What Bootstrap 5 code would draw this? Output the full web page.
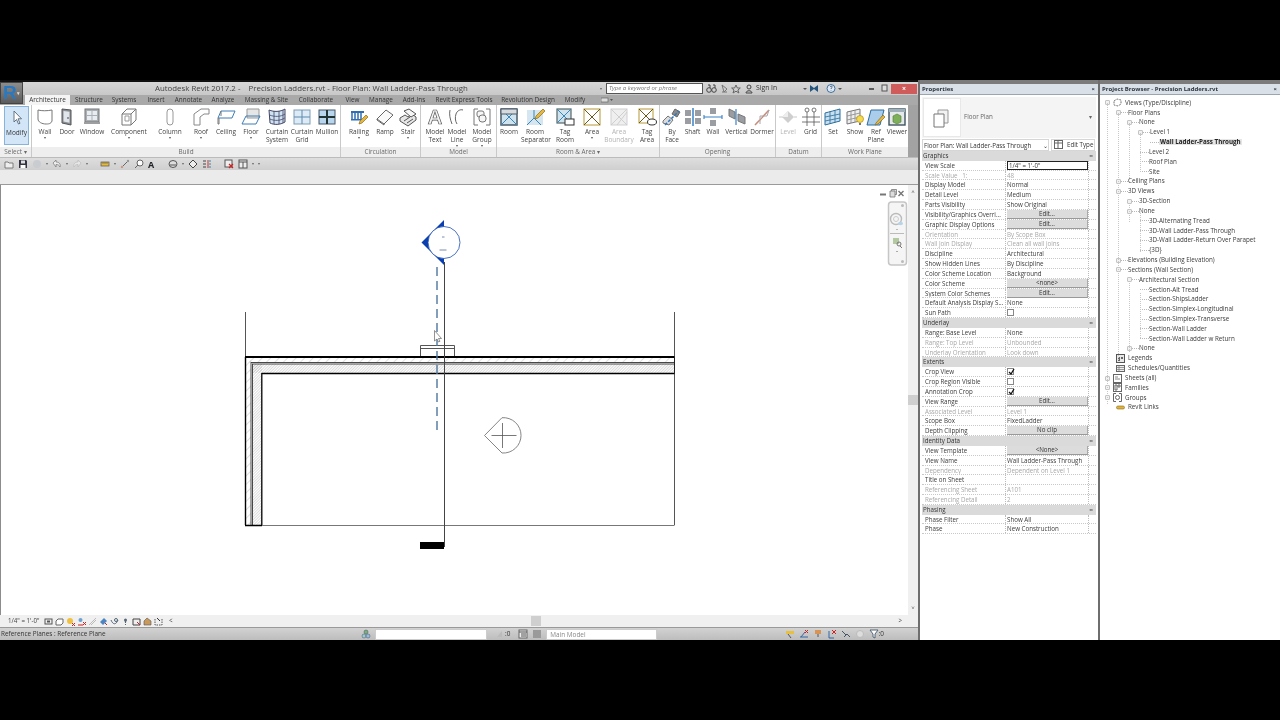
<!DOCTYPE html>
<html lang="en">
<head>
<meta charset="utf-8">
<title>Autodesk Revit 2017.2</title>
<link href="https://cdn.jsdelivr.net/npm/bootstrap@5.3.0/dist/css/bootstrap.min.css" rel="stylesheet">
<style>
html,body{margin:0;height:720px;overflow:hidden;background:#000}
body{font-family:"Open Sans","Liberation Sans",sans-serif;font-size:6.6px;color:#3a3a3a;padding-top:80px;line-height:1}
.rv-app{height:560px;width:1280px;background:#6e6e6e;filter:blur(.3px)}
.rv-main{width:918px;background:#fff;flex:none}
.rv-title{height:15px;border-top:2px solid #111;background:linear-gradient(#d8d8d8,#c8c8c8);position:relative}
.rv-logo{position:absolute;left:0;top:0;width:23px;height:22px;background:linear-gradient(#8d8d8d,#5c5c5c);border:1px solid #444;z-index:3;color:#2a78c0;font:bold 19px/20px "Liberation Sans",sans-serif;padding-left:2px}
.rv-logo small{position:absolute;left:16px;top:8px;font-size:5px;line-height:5px;color:#ddd}
.rv-titletext{width:600px;padding-left:155px;font-size:7.85px;line-height:11px;white-space:pre;color:#444;flex:none}
.rv-search{width:97px;height:11px;background:#fff;border:1px solid #555;font-style:italic;font-size:6px;line-height:9px;padding-left:2px;color:#777;margin-left:4px;flex:none}
.rv-signin{font-size:6.8px;color:#333;width:46px;flex:none;margin-left:1px}
.rv-close{width:26px;height:10px;background:#d05b5b;color:#fff;font-size:7px;line-height:9px;text-align:center;margin-right:1px;font-weight:bold;flex:none}
.rv-tabs{height:10px;background:#a9a9a9;padding-left:25px}
.rv-tabs>div{text-align:center;font-size:6.4px;line-height:10px;color:#333;white-space:nowrap}
.rv-tabs>.rv-on{background:#f4f4f4}
.t45{width:45px}.t38{width:38px}.t32{width:32px}.t33{width:33px}.t36{width:36px}.t51{width:51px}.t48{width:48px}.t25{width:25px}.t34{width:34px}.t66{width:66px}.t62{width:62px}
.rv-ribbon{height:52px;background:#a2a2a2}
.rv-panel{border-right:1px solid #c9c9c9;height:52px;background:#fff}
.rv-tools{height:42px}
.rv-ptitle{height:10px;background:#eeeeee;text-align:center;font-size:6.4px;line-height:10px;color:#6a6a6a;white-space:nowrap}
.rv-tool{text-align:center;padding-top:2px;font-size:6.5px;line-height:8px;color:#444;flex:none;position:relative;white-space:nowrap}
.rv-tool svg{display:block;margin:0 auto 1px;width:20px;height:20px}
.rv-off{color:#b4b4b4}
.rv-sel{background:#d3e6f7;border:1px solid #88b4dc;height:39px;margin:1px 3px 0 4px;width:25px;padding-top:1px;color:#333}
.rv-drop::after{content:"";display:block;width:0;height:0;margin:1px auto 0;border:1.5px solid transparent;border-top:2px solid #555;border-bottom:0}
.w19{width:19px}.w20{width:20px}.w21{width:21px}.w22{width:22px}.w24{width:24px}.w25{width:25px}.w26{width:26px}.w28{width:28px}.w32{width:32px}.w36{width:36px}.w46{width:46px}.w2{width:2px}.w3{width:3px}.w4{width:4px}
.p32{width:32px}.p309{width:309px}.p80{width:80px}.p76{width:76px}.p163{width:163px}.p116{width:116px}.p46{width:46px}.p86{width:86px}
.rv-qat{height:13px;background:linear-gradient(#dedede,#cfcfcf);padding-left:4px;gap:4px;border-top:1px solid #bbb}
.rv-qat svg{width:10px;height:10px;flex:none}
.rv-bigA{font-size:9px;width:8px}
.rv-caret{width:0;height:0;border:1.5px solid transparent;border-top:2px solid #666;border-bottom:0;flex:none}
.rv-band{height:15px;background:#ebebeb;border-bottom:1px solid #9a9a9a}
.rv-canvas{height:430px;background:#fff}
.rv-draw{width:908px;position:relative;border-left:1px solid #8c8c8c}
.rv-draw svg{position:absolute;left:-1px;top:0;width:908px;height:430px}
.rv-vs{width:10px;background:#f0f0f0;font-size:6px;color:#555;text-align:center;padding:4px 0}
.rv-gap200{height:200px;flex:none}
.rv-thumb{height:10px;background:#cfcfcf;width:100%;flex:none}
.rv-viewbar{height:12px;background:#f0f0f0;padding-left:8px;gap:2px;font-size:6.2px}
.rv-viewbar svg{width:9px;height:9px;flex:none}
.rv-scale{width:34px;color:#444;flex:none;white-space:nowrap}
.rv-spc{width:354px;flex:none}
.rv-hthumb{width:10px;height:10px;background:#cfcfcf;flex:none}
.rv-status{height:13px;background:linear-gradient(#d2d2d2,#bdbdbd);border-top:1px solid #999;font-size:6.4px;line-height:12px;color:#333;padding-right:34px}
.rv-stext{width:361px;padding-left:1px;flex:none}
.rv-status svg{width:10px;height:10px;flex:none}
.rv-inp{background:#fff;height:11px;border:1px solid #ccc;color:#888;padding-left:3px;font-size:6.4px;line-height:9px;flex:none}
.i112{width:112px}.i111{width:111px}
.rv-pn{background:#fff;position:relative;flex:none}
.rv-prop{width:178px;margin-left:2px}
.rv-brow{width:180px;margin-left:2px}
.rv-phead{height:15px;border-top:4px solid #7b7b7b;background:#d9e0e7;border-bottom:1px solid #9aa5b0;font-weight:700;font-size:6px;line-height:10px;padding:0 3px 0 2px;color:#2c3440;white-space:nowrap}
.rv-type{height:41px;margin:2px 2px 0;background:#f4f4f4;padding:0;font-size:6.2px;color:#666}
.rv-thumbnail{width:38px;height:39px;background:#fff;border:1px solid #e8e8e8;flex:none;margin:0 3px 0 1px}
.rv-pick{height:13px;margin:0 2px;font-size:6.2px;line-height:11px;color:#333;gap:2px}
.rv-sel2{width:127px;border:1px solid #d6d6d6;padding-left:1px;background:#fff;height:12px;flex:none;white-space:nowrap}
.rv-edit{width:44px;flex:none;border:1px solid #d6d6d6;height:12px;padding:0 0 0 2px;font-size:6.2px;background:#fff;white-space:nowrap}
.rv-rows{margin:0 2px;font-size:6.2px}
.rv-row{height:9.84px;border-bottom:1px dotted #c9c9c9;color:#3a3a3a;line-height:9px;white-space:nowrap}
.rv-k{width:84px;padding-left:3px;border-right:1px dotted #bbb;overflow:hidden;flex:none;height:100%}
.rv-v{width:83px;padding-left:1px;border-right:1px dotted #bbb;flex:none;height:100%;position:relative}
.rv-g{color:#a8a8a8}
.rv-hd{height:9.84px;background:#dadada;padding:0 3px 0 1px;line-height:9px;color:#333;white-space:nowrap}
.rv-hd b{font-weight:400;flex:1}
.rv-btnx{display:block;width:81px;height:9px;padding:0;margin:0;border:0;border-radius:0;font-size:6.2px;line-height:8px;background:#dcdcdc;border-bottom:1px solid #999;border-right:1px solid #aaa;color:#333;text-align:center}
.rv-edit2{display:block;width:81px;height:9px;border:1px solid #222;line-height:7px;margin-top:0;padding-left:1px;background:#fff}
.rv-cb{display:block;width:7px;height:7px;border:1px solid #888;background:#fff;margin:1px 0 0 0;position:relative}
.rv-cb svg{position:absolute;left:0;top:-1px;width:7px;height:7px}
.rv-tree{font-size:6.25px;padding-top:3px;color:#3a3a3a;position:relative}
.rv-tr{height:9.84px;white-space:nowrap}
.rv-box{width:5px;height:5px;border:1px solid #c4c4c4;background:#f2f2f2;flex:none;border-radius:1px}
.rv-dot{border-top:1px dotted #b9b9b9;flex:none}
.d6{width:7px}.d9{width:9px}
.s5{width:5px;flex:none}.s16{width:16px;flex:none}.s27{width:27px;flex:none}.s38{width:38px;flex:none}.s40{width:40px;flex:none}.s50{width:50px;flex:none}.s13{width:13px;flex:none}
.rv-ic{width:9px;height:9px;flex:none;margin:0 3px 0 3px}
.rv-tree .rv-cur{background:#e6e6e6;font-weight:700;color:#222;padding:0 1px}
.rv-vl{position:absolute;left:0;top:0;width:180px;height:320px;pointer-events:none}
</style>
</head>
<body>
<svg width="0" height="0" class="d-none">
<defs>
<linearGradient id="bl" x1="0" y1="0" x2="0" y2="1"><stop offset="0" stop-color="#bcd9ee"/><stop offset="1" stop-color="#4e93cf"/></linearGradient>
<linearGradient id="gy" x1="0" y1="0" x2="1" y2="1"><stop offset="0" stop-color="#f4f4f4"/><stop offset="1" stop-color="#bdbdbd"/></linearGradient>
<linearGradient id="yl" x1="0" y1="0" x2="0" y2="1"><stop offset="0" stop-color="#f9e48e"/><stop offset="1" stop-color="#eecb52"/></linearGradient>
</defs>
</svg>

<div class="rv-app d-flex">
 <div class="rv-main d-flex flex-column">
  <div class="rv-title d-flex align-items-center">
   <div class="rv-logo">R<small>▾</small></div>
   <div class="rv-titletext">Autodesk Revit 2017.2 -    Precision Ladders.rvt - Floor Plan: Wall Ladder-Pass Through</div>
   <div class="rv-caret"></div>
   <div class="rv-search">Type a keyword or phrase</div>
   <svg width="52" height="11" viewBox="0 0 52 11" class="flex-none"><g fill="none" stroke="#444"><circle cx="6" cy="7" r="2.300"/><circle cx="11" cy="7" r="2.300"/><path d="M5 2h2v3M10 2h2v3"/><path d="M19 2l5 4-3 3zM19 9h5" stroke="#777"/><path d="M33 2l1.300 3h3l-2.400 2 1 3-2.900-1.800L30 10l1-3-2.400-2h3z" stroke="#666"/><circle cx="46" cy="4" r="2"/><path d="M43 10c0-3 6-3 6 0z"/></g></svg>
   <div class="rv-signin">Sign In</div>
   <svg width="42" height="11" viewBox="0 0 42 11" class="flex-none"><path d="M1 5l2 2 2-2z" fill="#555"/><path d="M8 2l4 3 4-3v7l-4-3-4 3z" fill="#24557f"/><circle cx="29" cy="5.500" r="4" fill="#dfeaf6" stroke="#3f6f9f"/><path d="M28 4c1-1.500 3-.5 2 .5-.6.6-1 .8-1 1.500M29 7.500v.5" stroke="#345" fill="none" stroke-width=".8"/><path d="M36 5l2 2 2-2z" fill="#555"/></svg>
   <svg width="28" height="11" viewBox="0 0 28 11" class="ms-auto flex-none"><path d="M6 6h5" stroke="#333" stroke-width="1.500"/><rect x="19" y="2" width="5" height="6" fill="#ddd" stroke="#555"/></svg>
   <div class="rv-close">×</div>
  </div>

  <div class="rv-tabs d-flex">
   <div class="t45 rv-on">Architecture</div><div class="t38">Structure</div><div class="t32">Systems</div><div class="t32">Insert</div><div class="t33">Annotate</div><div class="t36">Analyze</div><div class="t51">Massing &amp; Site</div><div class="t48">Collaborate</div><div class="t25">View</div><div class="t32">Manage</div><div class="t34">Add-Ins</div><div class="t66">Revit Express Tools</div><div class="t62">Revolution Design</div><div class="t32">Modify</div><div class="t32"><svg width="12" height="6" viewBox="0 0 12 6"><rect x="0" y="1" width="7" height="4" fill="#ddd" stroke="#666" stroke-width=".7"/><path d="M9 2l1.500 2 1.500-2z" fill="#555"/></svg></div>
  </div>

  <div class="rv-ribbon d-flex">
   <div class="rv-panel p32 d-flex flex-column flex-none">
    <div class="rv-tools d-flex"><div class="rv-tool rv-sel"><svg viewBox="0 0 20 20"><path d="M7 3v11l2.500-2.500 2 4.500 1.500-.7-2-4.500h3.500z" fill="#fff" stroke="#567" stroke-width=".9"/></svg>Modify</div></div>
    <div class="rv-ptitle">Select <span>▾</span></div>
   </div>
   <div class="rv-panel p309 d-flex flex-column flex-none">
    <div class="rv-tools d-flex">
     <div class="w2"></div>
     <div class="rv-tool w22 rv-drop"><svg viewBox="0 0 20 20"><path d="M3 3c4 1 9 1 14 0v11c-1 3-4 3-6 3-4 0-8-2-8-5z" fill="url(#gy)" stroke="#777"/></svg>Wall</div>
     <div class="rv-tool w22"><svg viewBox="0 0 20 20"><path d="M5 2l9 1v15l-9-2z" fill="#8a8f96" stroke="#555"/><path d="M6.500 4l6 .7v11l-6-1.200z" fill="#dfe5ea"/><circle cx="11" cy="11" r=".8" fill="#333"/></svg>Door</div>
     <div class="rv-tool w28"><svg viewBox="0 0 20 20"><rect x="3" y="2" width="14" height="13" fill="#aab0b5" stroke="#777"/><path d="M5 4h4.500v4H5zM10.500 4H15v4h-4.500zM5 9h4.500v4H5zM10.500 9H15v4h-4.500z" fill="#e9edf1"/><path d="M2 15h16v2H2z" fill="#9f9f9f"/></svg>Window</div>
     <div class="rv-tool w46 rv-drop"><svg viewBox="0 0 20 20"><path d="M3 7l5-5h9v11l-5 5H3z" fill="url(#gy)" stroke="#777"/><path d="M3 7h9v11M12 7l5-5" fill="none" stroke="#777"/><path d="M6 9h4v5H6z" fill="#fff" stroke="#999"/></svg>Component</div>
     <div class="rv-tool w36 rv-drop"><svg viewBox="0 0 20 20"><rect x="7" y="2" width="6" height="16" rx="3" fill="url(#gy)" stroke="#999"/></svg>Column</div>
     <div class="rv-tool w26 rv-drop"><svg viewBox="0 0 20 20"><path d="M3 18V7l7-5h8v5h-5l-4 3v8z" fill="url(#gy)" stroke="#888"/></svg>Roof</div>
     <div class="rv-tool w24"><svg viewBox="0 0 20 20"><path d="M5 4h14l-3 7H2z" fill="url(#bl)" stroke="#3e7db5"/><path d="M2 11v6h1v-6M5 4v5" stroke="#777" fill="none"/></svg>Ceiling</div>
     <div class="rv-tool w26 rv-drop"><svg viewBox="0 0 20 20"><path d="M6 2h12v9H6z" fill="#e6e6e6" stroke="#999"/><path d="M5 9h14l-4 8H1z" fill="url(#bl)" stroke="#3e7db5"/></svg>Floor</div>
     <div class="rv-tool w26"><svg viewBox="0 0 20 20"><path d="M2 3c5 2 11 2 16-1v13c-5 3-11 3-15 1z" fill="#cfe2f1" stroke="#446"/><path d="M7 4v13M12 4v13M16 3v13M2.500 8c5 2 11 2 15.500-1M2.800 12c5 2 10 2 15-1" stroke="#446" fill="none" stroke-width=".8"/></svg>Curtain<br>System</div>
     <div class="rv-tool w24"><svg viewBox="0 0 20 20"><rect x="2" y="3" width="16" height="14" fill="#dcebf6" stroke="#7d9db5"/><path d="M10 3v14M2 10h16" stroke="#5d8bb0"/></svg>Curtain<br>Grid</div>
     <div class="rv-tool w26"><svg viewBox="0 0 20 20"><rect x="2" y="3" width="16" height="14" fill="#b7d6ee" stroke="#456"/><path d="M10 3v14M2 10h16" stroke="#233" stroke-width="2"/></svg>Mullion</div>
    </div>
    <div class="rv-ptitle">Build</div>
   </div>
   <div class="rv-panel p80 d-flex flex-column flex-none">
    <div class="rv-tools d-flex">
     <div class="w4"></div>
     <div class="rv-tool w28 rv-drop"><svg viewBox="0 0 20 20"><path d="M2 4h13v2H2z" fill="#2f6fb0"/><path d="M3 6v7M6 6v7M9 6v7M12 6v7" stroke="#2f6fb0" stroke-width="1.500"/><path d="M2 12h13v1.500H2z" fill="#2f6fb0"/><path d="M10 17l1-3 6-6 2 2-6 6z" fill="#e7b83f" stroke="#8a6a1d" stroke-width=".7"/></svg>Railing</div>
     <div class="rv-tool w24"><svg viewBox="0 0 20 20"><path d="M2 12l9-9 7 5-9 9z" fill="#fafafa" stroke="#666"/><path d="M2 12v1l7 5v-1" fill="none" stroke="#666"/></svg>Ramp</div>
     <div class="rv-tool w22 rv-drop"><svg viewBox="0 0 20 20"><path d="M2 11l5-3 3 2 4-3 4 3v3l-8 6-8-5z" fill="#e6e6e6" stroke="#555"/><path d="M6 4l5-2 7 5-5 3z" fill="#f6f6f6" stroke="#555"/><path d="M6 14l6-4M9 16l6-4" stroke="#555"/></svg>Stair</div>
    </div>
    <div class="rv-ptitle">Circulation</div>
   </div>
   <div class="rv-panel p76 d-flex flex-column flex-none">
    <div class="rv-tools d-flex">
     <div class="w3"></div>
     <div class="rv-tool w22"><svg viewBox="0 0 20 20"><text x="10" y="17" text-anchor="middle" font-family="Liberation Sans,sans-serif" font-size="20" font-weight="700" fill="#f4f4f4" stroke="#555" stroke-width=".7">A</text></svg>Model<br>Text</div>
     <div class="rv-tool w22 rv-drop"><svg viewBox="0 0 20 20"><path d="M3 3c-1 4 0 9 2 14M16 3c-3-1-6 1-7 4s-1 7 1 10" fill="none" stroke="#666" stroke-width="1"/></svg>Model<br>Line</div>
     <div class="rv-tool w28 rv-drop"><svg viewBox="0 0 20 20"><path d="M6 2H2v16h4M14 2h4v16h-4" fill="none" stroke="#777"/><rect x="5" y="4" width="7" height="6" rx="2" fill="#f6f6f6" stroke="#777"/><rect x="7" y="8" width="7" height="7" rx="3" fill="#f6f6f6" stroke="#777"/></svg>Model<br>Group</div>
    </div>
    <div class="rv-ptitle">Model</div>
   </div>
   <div class="rv-panel p163 d-flex flex-column flex-none">
    <div class="rv-tools d-flex">
     <div class="rv-tool w24"><svg viewBox="0 0 20 20"><rect x="2" y="2" width="16" height="16" fill="#cfe3ef" stroke="#4a5b68" stroke-width="1.500"/><path d="M2 2l16 16M18 2L2 18" stroke="#3a87b5"/><path d="M2 2h16v5H2z" fill="#d6dadd" stroke="#4a5b68"/></svg>Room</div>
     <div class="rv-tool w28"><svg viewBox="0 0 20 20"><path d="M2 3h16v15H2z" fill="#d6e6f0"/><path d="M2 18l7-7 7 7M9 11V3" stroke="#3a87b5" fill="none"/><path d="M10 12l1-3 7-7 2 2-7 7z" fill="#e7b83f" stroke="#8a6a1d" stroke-width=".7"/></svg>Room<br>Separator</div>
     <div class="rv-tool w32"><svg viewBox="0 0 20 20"><rect x="2" y="2" width="14" height="14" fill="#cfe3ef" stroke="#566" stroke-width="1.200"/><path d="M2 2l14 14M16 2L2 16" stroke="#3a87b5"/><rect x="10" y="12" width="9" height="6" fill="#fff" stroke="#333"/></svg>Tag<br>Room</div>
     <div class="rv-tool w22 rv-drop"><svg viewBox="0 0 20 20"><rect x="2" y="2" width="16" height="16" fill="url(#yl)" stroke="#b69a36"/><path d="M2 2l16 16M18 2L2 18" stroke="#6b5a1c"/></svg>Area</div>
     <div class="rv-tool w32 rv-off"><svg viewBox="0 0 20 20"><rect x="2" y="2" width="16" height="16" fill="#efefef" stroke="#cfcfcf"/><path d="M2 2l16 16M18 2L2 18M18 5L8 18" stroke="#cfcfcf"/></svg>Area<br>Boundary</div>
     <div class="rv-tool w24"><svg viewBox="0 0 20 20"><rect x="2" y="2" width="14" height="14" fill="url(#yl)" stroke="#b69a36"/><path d="M2 2l14 14M16 2L2 16" stroke="#6b5a1c"/><ellipse cx="15" cy="15" rx="4.500" ry="3" fill="#fff" stroke="#333"/></svg>Tag<br>Area</div>
    </div>
    <div class="rv-ptitle">Room &amp; Area ▾</div>
   </div>
   <div class="rv-panel p116 d-flex flex-column flex-none">
    <div class="rv-tools d-flex">
     <div class="w2"></div>
     <div class="rv-tool w22"><svg viewBox="0 0 20 20"><path d="M1 14l5-5 5 4-4 5-6-2z" fill="#dcdcdc" stroke="#777"/><path d="M13 2l5 3-3 5-5-3z" fill="#8a8a8a" stroke="#666"/><path d="M3 18L17 4" stroke="#2f75c0" stroke-width="1.500" stroke-dasharray="3 1.500"/></svg>By<br>Face</div>
     <div class="rv-tool w19"><svg viewBox="0 0 20 20"><path d="M2 3h6v6H2zM12 3h6v6h-6zM2 11h6v6H2zM12 11h6v6h-6z" fill="#9a9ea2"/><path d="M10 1v18" stroke="#3b82c4" stroke-width="1.500"/></svg>Shaft</div>
     <div class="rv-tool w22"><svg viewBox="0 0 20 20"><path d="M7 1h6v6H7zM7 13h6v6H7z" fill="#9a9ea2"/><path d="M1 10h18M1 8v4M19 8v4" stroke="#3b82c4" stroke-width="1.100"/></svg>Wall</div>
     <div class="rv-tool w25"><svg viewBox="0 0 20 20"><path d="M2 2l6 3v7l-6-3zM11 7l7 3v7l-7-3z" fill="#9a9ea2" stroke="#777"/><path d="M9 2v16" stroke="#3b82c4" stroke-width="1.200"/></svg>Vertical</div>
     <div class="rv-tool w26"><svg viewBox="0 0 20 20"><path d="M3 18L17 3" stroke="#c98a7a" stroke-width="1.500"/><path d="M8 17V9h7l2-6" stroke="#a8a8a8" fill="none"/><path d="M4 16l6-6" stroke="#d9b0a5"/></svg>Dormer</div>
    </div>
    <div class="rv-ptitle">Opening</div>
   </div>
   <div class="rv-panel p46 d-flex flex-column flex-none">
    <div class="rv-tools d-flex">
     <div class="rv-tool w24 rv-off"><svg viewBox="0 0 20 20"><path d="M1 10h4M16 10h3" stroke="#c9c9c9"/><path d="M10 4l6 6-6 6-6-6z" fill="#cfcfcf"/><path d="M10 4v6H4z" fill="#eee"/></svg>Level</div>
     <div class="rv-tool w21"><svg viewBox="0 0 20 20"><g fill="none" stroke="#555" stroke-width=".8"><circle cx="6" cy="3" r="2"/><circle cx="13" cy="3" r="2"/><path d="M6 5v14M13 5v14M1 10h18M1 15h18"/></g></svg>Grid</div>
    </div>
    <div class="rv-ptitle">Datum</div>
   </div>
   <div class="rv-panel p86 d-flex flex-column flex-none border-0">
    <div class="rv-tools d-flex">
     <div class="rv-tool w22"><svg viewBox="0 0 20 20"><path d="M2 6c4-1 11-3 15-4v12L2 18z" fill="#c8dff0" stroke="#2a6d9d"/><path d="M7 4.500v12M12 3.500v12M2 10l15-3M2 14l15-3" stroke="#2a6d9d" fill="none" stroke-width=".8"/></svg>Set</div>
     <div class="rv-tool w22"><svg viewBox="0 0 20 20"><path d="M2 5l13-3v12L2 17z" fill="#eee" stroke="#777"/><path d="M6 4v12M10 3v12M2 9l13-3M2 13l13-3" stroke="#888" fill="none" stroke-width=".8"/><circle cx="15" cy="12" r="3.500" fill="#f5d94e" stroke="#a88c1d" stroke-width=".7"/><path d="M14 16h2v2h-2z" fill="#777"/></svg>Show</div>
     <div class="rv-tool w20"><svg viewBox="0 0 20 20"><path d="M5 3h13l-4 15H1z" fill="#a9cdea" stroke="#2a6d9d"/><path d="M9 18l1-2 7-8 2 2-7 7z" fill="#e7b83f" stroke="#8a6a1d" stroke-width=".7"/></svg>Ref<br>Plane</div>
     <div class="rv-tool w22"><svg viewBox="0 0 20 20"><rect x="2" y="2" width="16" height="16" fill="#e6e9eb" stroke="#3f5360" stroke-width="1.400"/><rect x="2" y="2" width="16" height="3" fill="#9fb0ba"/><path d="M6 9l4-2 4 2v6l-4 2-4-2z" fill="#7eb05a" stroke="#4e7a33" stroke-width=".6"/></svg>Viewer</div>
    </div>
    <div class="rv-ptitle">Work Plane</div>
   </div>
  </div>

  <div class="rv-qat d-flex align-items-center">
   <svg viewBox="0 0 10 10"><path d="M1 3h3l1 1h4v5H1z" fill="#eee" stroke="#666" stroke-width=".8"/></svg>
   <svg viewBox="0 0 10 10"><path d="M1 1h7l1 1v7H1z" fill="#334" /><rect x="3" y="1.500" width="4" height="3" fill="#ddd"/><rect x="2.500" y="6" width="5" height="3" fill="#fff"/></svg>
   <svg viewBox="0 0 10 10"><circle cx="5" cy="5" r="4" fill="#c9ccd0"/></svg><div class="rv-caret"></div>
   <svg viewBox="0 0 10 10"><path d="M1 4l3-3v2c3 0 5 2 4 5-1-2-2-2.500-4-2.500V8z" fill="#eee" stroke="#777" stroke-width=".7"/></svg><div class="rv-caret"></div>
   <svg viewBox="0 0 10 10"><path d="M9 4L6 1v2C3 3 1 5 2 8c1-2 2-2.500 4-2.500V8z" fill="#e6e6e6" stroke="#bbb" stroke-width=".7"/></svg><div class="rv-caret"></div>
   <div class="ms-1"></div>
   <svg viewBox="0 0 10 10"><rect x="1" y="3" width="8" height="4" fill="#e4b93c" stroke="#555" stroke-width=".7"/><path d="M3 3v2M5 3v2M7 3v2" stroke="#555" stroke-width=".6"/></svg><div class="rv-caret"></div>
   <svg viewBox="0 0 10 10"><path d="M1 9l8-8" stroke="#666"/><circle cx="2" cy="8" r="1.200" fill="#c98"/><circle cx="8" cy="2" r="1.200" fill="#999"/></svg>
   <svg viewBox="0 0 10 10"><circle cx="6" cy="4" r="3" fill="#fff" stroke="#666"/><path d="M4 6L1 9" stroke="#666"/></svg>
   <span class="fw-bold text-dark rv-bigA">A</span>
   <div class="ms-1"></div>
   <svg viewBox="0 0 10 10"><ellipse cx="5" cy="5" rx="4" ry="3.500" fill="#ddd" stroke="#555"/><path d="M2 6h6" stroke="#555"/></svg><div class="rv-caret"></div>
   <svg viewBox="0 0 10 10"><path d="M5 1l4 4-4 4-4-4z" fill="#eee" stroke="#444"/></svg>
   <svg viewBox="0 0 10 10"><path d="M1 2h3M1 5h3M1 8h3" stroke="#444"/><path d="M6 1v8" stroke="#c33"/><path d="M7 2h2M7 5h2M7 8h2" stroke="#38a"/></svg>
   <div class="ms-1"></div>
   <svg viewBox="0 0 10 10"><rect x="1" y="1" width="7" height="7" fill="#eee" stroke="#555"/><path d="M5 5l4 4M9 5L5 9" stroke="#c22" stroke-width="1.200"/></svg>
   <svg viewBox="0 0 10 10"><rect x="1" y="1" width="8" height="8" fill="#eee" stroke="#555"/><path d="M1 3h8M5 3v6" stroke="#555"/></svg><div class="rv-caret"></div>
   <div class="rv-caret"></div>
  </div>
  <div class="rv-band"></div>

  <div class="rv-canvas d-flex">
   <div class="rv-draw">
    <svg viewBox="0 185 908 430">
     <defs>
      <pattern id="h1" width="6" height="6" patternUnits="userSpaceOnUse" patternTransform="rotate(45)"><path d="M0 0V6" stroke="#999" stroke-width=".6"/></pattern>
      <pattern id="h2" width="2" height="2" patternUnits="userSpaceOnUse" patternTransform="rotate(45)"><path d="M0 0V2" stroke="#aaa" stroke-width=".8"/></pattern>
     </defs>
     <path d="M245.500 312V525M674.500 312V525" stroke="#555"/>
     <rect x="246" y="358" width="428" height="4.500" fill="url(#h1)"/>
     <rect x="252" y="364" width="422" height="9" fill="url(#h2)"/>
     <rect x="253" y="364" width="9" height="161" fill="url(#h2)"/>
     <rect x="246" y="358" width="5" height="167" fill="url(#h1)"/>
     <path d="M245 357H674.500" stroke="#000" stroke-width="2"/>
     <path d="M251 362.500H674M252 364H674M251 362V525M252.500 364V525" stroke="#333" stroke-width=".9"/>
     <path d="M262 373.500H674.500M261.800 373V525" stroke="#000" stroke-width="1.300"/>
     <path d="M674.500 357V374" stroke="#222"/>
     <path d="M245.500 357V525M245 525.500H262" stroke="#000" stroke-width="1.400"/>
     <path d="M262 525.500H674.500" stroke="#777"/>
     <path d="M420.500 356V345.500H454.500V356M420.500 348.500H454.500" fill="none" stroke="#555"/>
     <path d="M444.500 262V547" stroke="#444"/>
     <path d="M437 267V433" stroke="#4f769f" stroke-width="1.400" stroke-dasharray="9 5"/>
     <rect x="420" y="542" width="24" height="7" fill="#000"/>
     <polygon points="421.500,242.500 444,220 444,265" fill="#0b3fb0"/>
     <circle cx="444" cy="242.500" r="16" fill="#fff" stroke="#1e4fb0" stroke-width=".8"/>
     <path d="M442 237h2.500M439.500 250h7" stroke="#6a7fa5" stroke-width=".9"/>
     <path d="M484.500 435.500L502 417.700A17.700 17.700 0 1 1 502 453Z" fill="#fff" stroke="#777" stroke-width=".9"/>
     <path d="M491.500 435.500H516.500M502.500 423V448" stroke="#555" stroke-width=".8"/>
     <path d="M434.500 330.500V341L437 339l1.500 3 1.500-.7-1.500-2.800h3z" fill="#fff" stroke="#666" stroke-width=".7"/>
     <path d="M880 194.500h6" stroke="#777" stroke-width="2"/>
     <path d="M890 191h5v6h-5zM891.500 191v-1.500h5v5h-1.500" fill="#ddd" stroke="#777" stroke-width=".8"/>
     <path d="M898.500 191l5 5M903.500 191l-5 5" stroke="#777" stroke-width="1.400"/>
     <rect x="888.500" y="202" width="18" height="63" rx="3" fill="#f5f5f5" stroke="#c6c6c6" stroke-width="1.500"/>
     <circle cx="902.500" cy="205.500" r="1.500" fill="#bbb"/><circle cx="902.500" cy="261.500" r="1.500" fill="#bbb"/>
     <circle cx="896" cy="219" r="5.500" fill="none" stroke="#bbb" stroke-width="1.400"/><circle cx="896" cy="219" r="2.500" fill="none" stroke="#ccc"/>
     <ellipse cx="900.500" cy="223.500" rx="2.500" ry="1.800" fill="#b9d3e6"/>
     <path d="M896 229.500h2M890 233.500h14" stroke="#bbb"/>
     <rect x="893" y="238" width="6" height="6" fill="#b2c9a2"/><circle cx="899" cy="244" r="2" fill="none" stroke="#777"/><path d="M900 246l2 2" stroke="#777"/>
     <path d="M896 251.500h2" stroke="#aaa"/>
    </svg>
   </div>
   <div class="rv-vs d-flex flex-column align-items-center"><span>˄</span><div class="rv-gap200"></div><div class="rv-thumb"></div><div class="flex-grow-1"></div><span>˅</span></div>
  </div>

  <div class="rv-viewbar d-flex align-items-center">
   <div class="rv-scale">1/4" = 1'-0"</div>
   <svg viewBox="0 0 9 9"><rect x="1" y="2" width="7" height="5" fill="#eee" stroke="#555"/><rect x="3" y="3.500" width="3" height="2" fill="#555"/></svg>
   <svg viewBox="0 0 9 9"><path d="M1 4l2-2h5v4L6 8H1z" fill="#fff" stroke="#666"/></svg>
   <svg viewBox="0 0 9 9"><circle cx="4" cy="4" r="3" fill="#f0c040"/><path d="M6 6l3 3M9 6L6 9" stroke="#c22"/></svg>
   <svg viewBox="0 0 9 9"><circle cx="3.500" cy="3" r="2" fill="#6fa0d0"/><path d="M1 8h5M6 5l3 3M9 5L6 8" stroke="#c22"/></svg>
   <svg viewBox="0 0 9 9"><path d="M1 8l7-7M3 8l5-5" stroke="#bbb"/></svg>
   <svg viewBox="0 0 9 9"><path d="M1 5l4-4 3 3-4 4z" fill="#4c85c4"/><path d="M6 6l2 2" stroke="#c22"/></svg>
   <svg viewBox="0 0 9 9"><path d="M1 3c2 5 5 5 7 0" fill="none" stroke="#567"/><circle cx="6" cy="3" r="1.500" fill="none" stroke="#567"/></svg>
   <svg viewBox="0 0 9 9"><path d="M3 3a1.500 1.500 0 1 1 3 0c0 1-1 1-1 3H4c0-2-1-2-1-3zM4 7h1v1H4z" fill="#567"/></svg>
   <svg viewBox="0 0 9 9"><path d="M1 2h7v6H1z" fill="#eee" stroke="#444"/><path d="M5 5l3 3" stroke="#c22"/></svg>
   <svg viewBox="0 0 9 9"><path d="M1 8V4l3-3 4 3v4z" fill="#c99a5a" stroke="#555" stroke-width=".6"/></svg>
   <svg viewBox="0 0 9 9"><path d="M1 2v6h7V2" fill="none" stroke="#555" stroke-dasharray="1.500 1"/><path d="M3 1l3 3" stroke="#333"/></svg>
   <span class="ms-1">&lt;</span>
   <div class="rv-spc"></div>
   <div class="rv-hthumb"></div>
   <span class="ms-auto me-3">&gt;</span>
  </div>

  <div class="rv-status d-flex align-items-center">
   <div class="rv-stext">Reference Planes : Reference Plane</div>
   <svg viewBox="0 0 10 10"><circle cx="5" cy="3" r="2" fill="#7bb07a" stroke="#456" stroke-width=".5"/><circle cx="3" cy="7" r="2" fill="#9cc" stroke="#456" stroke-width=".5"/><circle cx="7" cy="7" r="2" fill="#9bd" stroke="#456" stroke-width=".5"/></svg>
   <div class="rv-inp i112 ms-1"></div>
   <svg viewBox="0 0 10 10" class="ms-2"><path d="M2 8l5-6v6z" fill="#bbb"/></svg><span>:0</span>
   <svg viewBox="0 0 10 10" class="ms-2"><rect x="1" y="1" width="8" height="8" fill="#eee" stroke="#666"/><path d="M1 3h8M3 5h5M3 7h5" stroke="#555"/></svg>
   <svg viewBox="0 0 10 10" class="ms-1"><rect x="1" y="1" width="8" height="8" fill="#9a9a9a"/></svg>
   <div class="rv-inp i111 ms-1">Main Model</div>
   <svg viewBox="0 0 10 10" class="ms-auto"><path d="M1 2h8v3H1z" fill="#e8c040"/><path d="M3 5l3 4" stroke="#555"/></svg>
   <svg viewBox="0 0 10 10" class="ms-1"><path d="M1 8h8M2 8l4-5" stroke="#36a"/><path d="M6 1l3 3M9 1L6 4" stroke="#c22"/></svg>
   <svg viewBox="0 0 10 10" class="ms-1"><path d="M2 1h6v4H2z" fill="#d99455"/><path d="M5 5v3" stroke="#555"/></svg>
   <svg viewBox="0 0 10 10" class="ms-1"><path d="M2 2v7h5" fill="none" stroke="#36a"/><path d="M5 1l4 4M9 1L5 5" stroke="#c22"/></svg>
   <svg viewBox="0 0 10 10" class="ms-1"><path d="M1 2l4 4M3 8l3-3 3 3" stroke="#456" fill="none"/></svg>
   <svg viewBox="0 0 10 10" class="ms-1"><circle cx="5" cy="5" r="3.500" fill="#ddd" stroke="#bbb"/></svg>
   <svg viewBox="0 0 10 10" class="ms-1"><path d="M1 1h8L6 5v4L4 8V5z" fill="#fff" stroke="#567"/></svg><span>:0</span>
  </div>
 </div>

 <div class="rv-pn rv-prop">
  <div class="rv-phead d-flex justify-content-between"><span>Properties</span><span>×</span></div>
  <div class="rv-type d-flex align-items-center">
   <div class="rv-thumbnail d-flex align-items-center justify-content-center"><svg width="20" height="20" viewBox="0 0 20 20"><path d="M6 2h10v13H6z" fill="#f2f2f2" stroke="#999"/><path d="M2 6h10v13H2z" fill="#fff" stroke="#777"/></svg></div>
   <span>Floor Plan</span><span class="ms-auto me-1">▾</span>
  </div>
  <div class="rv-pick d-flex align-items-center">
   <div class="rv-sel2 d-flex justify-content-between"><span>Floor Plan: Wall Ladder-Pass Through</span><span>⌄</span></div>
   <div class="rv-edit d-flex align-items-center gap-1"><svg width="9" height="9" viewBox="0 0 9 9"><rect x=".5" y=".5" width="8" height="8" fill="#fff" stroke="#666"/><path d="M.5 3h8M4 .5v8" stroke="#666"/></svg>Edit Type</div>
  </div>
  <div class="rv-rows">
   <div class="rv-hd d-flex"><b>Graphics</b><span>≈</span></div>
   <div class="rv-row d-flex"><div class="rv-k">View Scale</div><div class="rv-v"><span class="rv-edit2">1/4" = 1'-0"</span></div></div>
   <div class="rv-row d-flex rv-g"><div class="rv-k">Scale Value &nbsp;&nbsp;1:</div><div class="rv-v">48</div></div>
   <div class="rv-row d-flex"><div class="rv-k">Display Model</div><div class="rv-v">Normal</div></div>
   <div class="rv-row d-flex"><div class="rv-k">Detail Level</div><div class="rv-v">Medium</div></div>
   <div class="rv-row d-flex"><div class="rv-k">Parts Visibility</div><div class="rv-v">Show Original</div></div>
   <div class="rv-row d-flex"><div class="rv-k">Visibility/Graphics Overri...</div><div class="rv-v"><button class="btn rv-btnx">Edit...</button></div></div>
   <div class="rv-row d-flex"><div class="rv-k">Graphic Display Options</div><div class="rv-v"><button class="btn rv-btnx">Edit...</button></div></div>
   <div class="rv-row d-flex rv-g"><div class="rv-k">Orientation</div><div class="rv-v">By Scope Box</div></div>
   <div class="rv-row d-flex rv-g"><div class="rv-k">Wall Join Display</div><div class="rv-v">Clean all wall joins</div></div>
   <div class="rv-row d-flex"><div class="rv-k">Discipline</div><div class="rv-v">Architectural</div></div>
   <div class="rv-row d-flex"><div class="rv-k">Show Hidden Lines</div><div class="rv-v">By Discipline</div></div>
   <div class="rv-row d-flex"><div class="rv-k">Color Scheme Location</div><div class="rv-v">Background</div></div>
   <div class="rv-row d-flex"><div class="rv-k">Color Scheme</div><div class="rv-v"><button class="btn rv-btnx">&lt;none&gt;</button></div></div>
   <div class="rv-row d-flex"><div class="rv-k">System Color Schemes</div><div class="rv-v"><button class="btn rv-btnx">Edit...</button></div></div>
   <div class="rv-row d-flex"><div class="rv-k">Default Analysis Display S...</div><div class="rv-v">None</div></div>
   <div class="rv-row d-flex"><div class="rv-k">Sun Path</div><div class="rv-v"><span class="rv-cb"></span></div></div>
   <div class="rv-hd d-flex"><b>Underlay</b><span>≈</span></div>
   <div class="rv-row d-flex"><div class="rv-k">Range: Base Level</div><div class="rv-v">None</div></div>
   <div class="rv-row d-flex rv-g"><div class="rv-k">Range: Top Level</div><div class="rv-v">Unbounded</div></div>
   <div class="rv-row d-flex rv-g"><div class="rv-k">Underlay Orientation</div><div class="rv-v">Look down</div></div>
   <div class="rv-hd d-flex"><b>Extents</b><span>≈</span></div>
   <div class="rv-row d-flex"><div class="rv-k">Crop View</div><div class="rv-v"><span class="rv-cb"><svg viewBox="0 0 7 7"><path d="M1 4l2 2 3-5" fill="none" stroke="#111" stroke-width="1.300"/></svg></span></div></div>
   <div class="rv-row d-flex"><div class="rv-k">Crop Region Visible</div><div class="rv-v"><span class="rv-cb"></span></div></div>
   <div class="rv-row d-flex"><div class="rv-k">Annotation Crop</div><div class="rv-v"><span class="rv-cb"><svg viewBox="0 0 7 7"><path d="M1 4l2 2 3-5" fill="none" stroke="#111" stroke-width="1.300"/></svg></span></div></div>
   <div class="rv-row d-flex"><div class="rv-k">View Range</div><div class="rv-v"><button class="btn rv-btnx">Edit...</button></div></div>
   <div class="rv-row d-flex rv-g"><div class="rv-k">Associated Level</div><div class="rv-v">Level 1</div></div>
   <div class="rv-row d-flex"><div class="rv-k">Scope Box</div><div class="rv-v">FixedLadder</div></div>
   <div class="rv-row d-flex"><div class="rv-k">Depth Clipping</div><div class="rv-v"><button class="btn rv-btnx">No clip</button></div></div>
   <div class="rv-hd d-flex"><b>Identity Data</b><span>≈</span></div>
   <div class="rv-row d-flex"><div class="rv-k">View Template</div><div class="rv-v"><button class="btn rv-btnx">&lt;None&gt;</button></div></div>
   <div class="rv-row d-flex"><div class="rv-k">View Name</div><div class="rv-v">Wall Ladder-Pass Through</div></div>
   <div class="rv-row d-flex rv-g"><div class="rv-k">Dependency</div><div class="rv-v">Dependent on Level 1</div></div>
   <div class="rv-row d-flex"><div class="rv-k">Title on Sheet</div><div class="rv-v"></div></div>
   <div class="rv-row d-flex rv-g"><div class="rv-k">Referencing Sheet</div><div class="rv-v">A101</div></div>
   <div class="rv-row d-flex rv-g"><div class="rv-k">Referencing Detail</div><div class="rv-v">2</div></div>
   <div class="rv-hd d-flex"><b>Phasing</b><span>≈</span></div>
   <div class="rv-row d-flex"><div class="rv-k">Phase Filter</div><div class="rv-v">Show All</div></div>
   <div class="rv-row d-flex"><div class="rv-k">Phase</div><div class="rv-v">New Construction</div></div>
  </div>
 </div>

 <div class="rv-pn rv-brow">
  <div class="rv-phead d-flex justify-content-between"><span>Project Browser - Precision Ladders.rvt</span><span>×</span></div>
  <div class="rv-tree">
   <div class="rv-tr d-flex align-items-center"><i class="s5"></i><i class="rv-box"></i><svg class="rv-ic" viewBox="0 0 9 9"><path d="M1 3l3-2 4 1v4l-3 2-4-1z" fill="none" stroke="#777" stroke-dasharray="2 1"/></svg><span>Views (Type/Discipline)</span></div>
   <div class="rv-tr d-flex align-items-center"><i class="s16"></i><i class="rv-box"></i><i class="rv-dot d6"></i><span>Floor Plans</span></div>
   <div class="rv-tr d-flex align-items-center"><i class="s27"></i><i class="rv-box"></i><i class="rv-dot d6"></i><span>None</span></div>
   <div class="rv-tr d-flex align-items-center"><i class="s38"></i><i class="rv-box"></i><i class="rv-dot d6"></i><span>Level 1</span></div>
   <div class="rv-tr d-flex align-items-center"><i class="s50"></i><i class="rv-dot d9"></i><span class="rv-cur">Wall Ladder-Pass Through</span></div>
   <div class="rv-tr d-flex align-items-center"><i class="s40"></i><i class="rv-dot d9"></i><span>Level 2</span></div>
   <div class="rv-tr d-flex align-items-center"><i class="s40"></i><i class="rv-dot d9"></i><span>Roof Plan</span></div>
   <div class="rv-tr d-flex align-items-center"><i class="s40"></i><i class="rv-dot d9"></i><span>Site</span></div>
   <div class="rv-tr d-flex align-items-center"><i class="s16"></i><i class="rv-box"></i><i class="rv-dot d6"></i><span>Ceiling Plans</span></div>
   <div class="rv-tr d-flex align-items-center"><i class="s16"></i><i class="rv-box"></i><i class="rv-dot d6"></i><span>3D Views</span></div>
   <div class="rv-tr d-flex align-items-center"><i class="s27"></i><i class="rv-box"></i><i class="rv-dot d6"></i><span>3D-Section</span></div>
   <div class="rv-tr d-flex align-items-center"><i class="s27"></i><i class="rv-box"></i><i class="rv-dot d6"></i><span>None</span></div>
   <div class="rv-tr d-flex align-items-center"><i class="s40"></i><i class="rv-dot d9"></i><span>3D-Alternating Tread</span></div>
   <div class="rv-tr d-flex align-items-center"><i class="s40"></i><i class="rv-dot d9"></i><span>3D-Wall Ladder-Pass Through</span></div>
   <div class="rv-tr d-flex align-items-center"><i class="s40"></i><i class="rv-dot d9"></i><span>3D-Wall Ladder-Return Over Parapet</span></div>
   <div class="rv-tr d-flex align-items-center"><i class="s40"></i><i class="rv-dot d9"></i><span>{3D}</span></div>
   <div class="rv-tr d-flex align-items-center"><i class="s16"></i><i class="rv-box"></i><i class="rv-dot d6"></i><span>Elevations (Building Elevation)</span></div>
   <div class="rv-tr d-flex align-items-center"><i class="s16"></i><i class="rv-box"></i><i class="rv-dot d6"></i><span>Sections (Wall Section)</span></div>
   <div class="rv-tr d-flex align-items-center"><i class="s27"></i><i class="rv-box"></i><i class="rv-dot d6"></i><span>Architectural Section</span></div>
   <div class="rv-tr d-flex align-items-center"><i class="s40"></i><i class="rv-dot d9"></i><span>Section-Alt Tread</span></div>
   <div class="rv-tr d-flex align-items-center"><i class="s40"></i><i class="rv-dot d9"></i><span>Section-ShipsLadder</span></div>
   <div class="rv-tr d-flex align-items-center"><i class="s40"></i><i class="rv-dot d9"></i><span>Section-Simplex-Longitudinal</span></div>
   <div class="rv-tr d-flex align-items-center"><i class="s40"></i><i class="rv-dot d9"></i><span>Section-Simplex-Transverse</span></div>
   <div class="rv-tr d-flex align-items-center"><i class="s40"></i><i class="rv-dot d9"></i><span>Section-Wall Ladder</span></div>
   <div class="rv-tr d-flex align-items-center"><i class="s40"></i><i class="rv-dot d9"></i><span>Section-Wall Ladder w Return</span></div>
   <div class="rv-tr d-flex align-items-center"><i class="s27"></i><i class="rv-box"></i><i class="rv-dot d6"></i><span>None</span></div>
   <div class="rv-tr d-flex align-items-center"><i class="s13"></i><svg class="rv-ic" viewBox="0 0 9 9"><rect x=".5" y=".5" width="8" height="8" fill="#e8e8e8" stroke="#555"/><path d="M2 3h2v4H2zM5 3h2v2H5z" fill="#666"/></svg><span>Legends</span></div>
   <div class="rv-tr d-flex align-items-center"><i class="s13"></i><svg class="rv-ic" viewBox="0 0 9 9"><rect x=".5" y="1.500" width="8" height="6" fill="#eee" stroke="#666"/><path d="M.5 3.500h8M.5 5.500h8M3 1.500v6" stroke="#777" stroke-width=".7"/></svg><span>Schedules/Quantities</span></div>
   <div class="rv-tr d-flex align-items-center"><i class="s5"></i><i class="rv-box"></i><svg class="rv-ic" viewBox="0 0 9 9"><rect x=".5" y=".5" width="8" height="8" fill="#fff" stroke="#666"/><path d="M2 3h3M2 5h5" stroke="#888"/></svg><span>Sheets (all)</span></div>
   <div class="rv-tr d-flex align-items-center"><i class="s5"></i><i class="rv-box"></i><svg class="rv-ic" viewBox="0 0 9 9"><rect x=".5" y=".5" width="8" height="8" fill="#fff" stroke="#666"/><path d="M2 2h2v5H2zM5 2h2v2H5z" fill="none" stroke="#666"/></svg><span>Families</span></div>
   <div class="rv-tr d-flex align-items-center"><i class="s5"></i><i class="rv-box"></i><svg class="rv-ic" viewBox="0 0 9 9"><path d="M3 .5H.5v8H3M6 .5h2.500v8H6" fill="none" stroke="#666"/><circle cx="4.500" cy="4.500" r="2" fill="none" stroke="#666"/></svg><span>Groups</span></div>
   <div class="rv-tr d-flex align-items-center"><i class="s13"></i><svg class="rv-ic" viewBox="0 0 9 9"><rect x=".5" y="3" width="8" height="3" rx="1.500" fill="#e2b33a" stroke="#8a6a1d" stroke-width=".6"/></svg><span>Revit Links</span></div>
   <svg class="rv-vl" viewBox="0 0 180 320"><path d="M7.500 8V310M18.500 18V265M29.500 28V88M29.500 108V128M29.500 188V258M40.500 38V78M40.500 118V158M40.500 198V244" stroke="#c8c8c8" stroke-dasharray="1 1" fill="none"/></svg>
  </div>
 </div>
</div>
<script src="https://cdn.jsdelivr.net/npm/bootstrap@5.3.0/dist/js/bootstrap.bundle.min.js"></script>
</body>
</html>
